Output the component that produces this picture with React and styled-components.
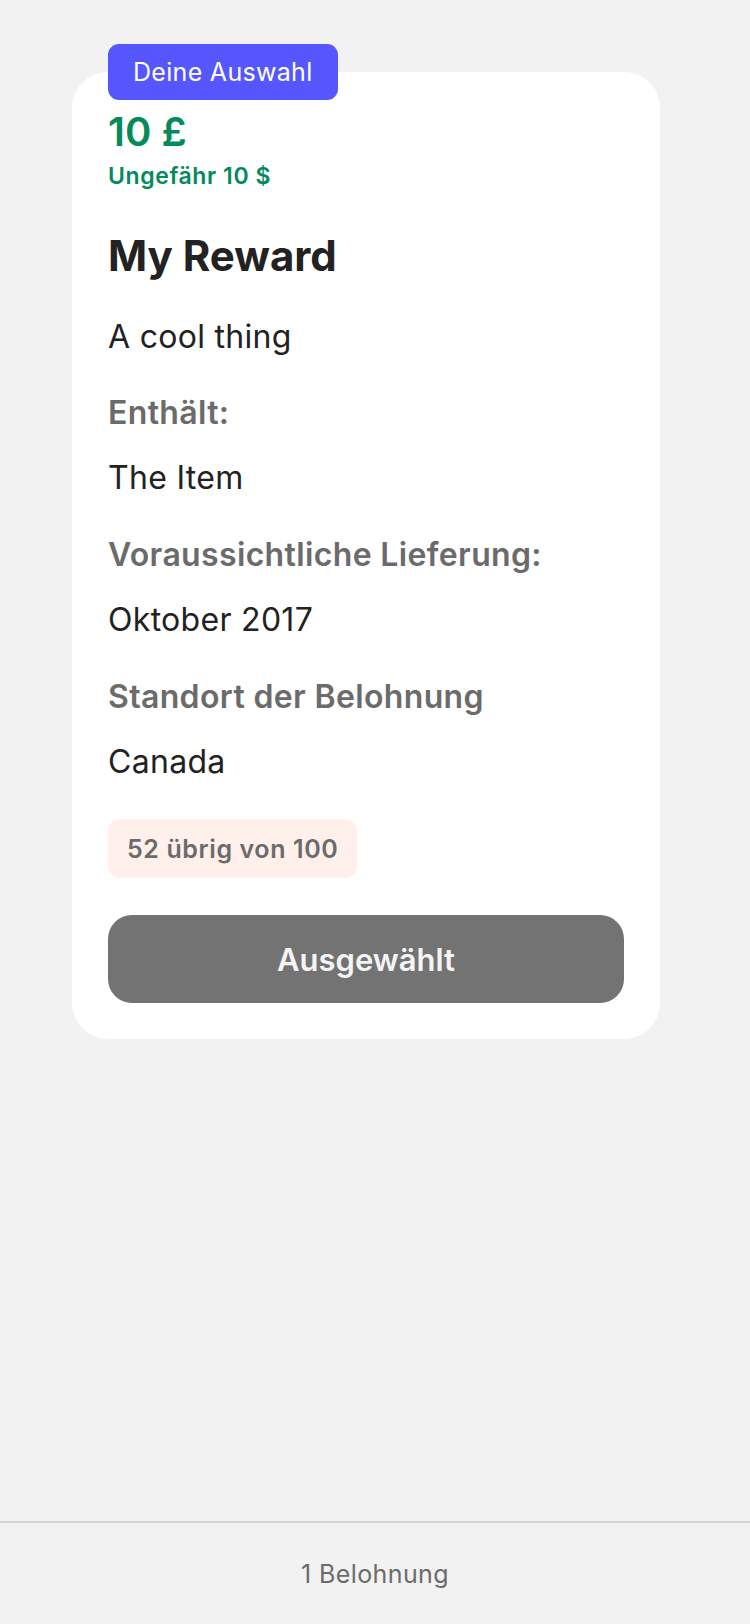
import React from "react";
import styled, { createGlobalStyle } from "styled-components";

const GlobalStyle = createGlobalStyle`
  html, body {
    margin: 0;
    padding: 0;
    background: #f2f2f2;
  }
  body {
    font-family: Inter, "Noto Sans", "Liberation Sans", sans-serif;
    -webkit-font-smoothing: antialiased;
  }
  * { box-sizing: border-box; }
`;

const Page = styled.div`
  min-height: 100vh;
  display: flex;
  flex-direction: column;
  background: #f2f2f2;
`;

const Main = styled.main`
  flex: 1;
  padding: 72px 90px 0 72px;
`;

const Card = styled.section`
  width: 588px;
  background: #ffffff;
  border-radius: 36px;
  padding: 0 36px 36px;
  display: flex;
  flex-direction: column;
  align-items: stretch;
`;

const SelectionBadge = styled.div`
  align-self: flex-start;
  margin-top: -28px;
  height: 56px;
  padding: 0 25px;
  display: flex;
  align-items: center;
  background: #5656ff;
  color: #ffffff;
  border-radius: 11px;
  font-size: 25px;
  letter-spacing: 0.3px;
  font-weight: 400;
`;

const Price = styled.div`
  margin-top: 8px;
  font-size: 40px;
  line-height: 48px;
  font-weight: 600;
  color: #048a5b;
`;

const Approx = styled.div`
  margin-top: 6px;
  font-size: 23px;
  line-height: 28px;
  letter-spacing: 0.6px;
  font-weight: 600;
  color: #048a5b;
`;

const Title = styled.h2`
  margin: 42px 0 0;
  font-size: 42px;
  line-height: 48px;
  font-weight: 700;
  color: #222222;
`;

const BodyText = styled.p`
  margin: ${(p) => p.$top || 0}px 0 0;
  font-size: 32px;
  line-height: 40px;
  letter-spacing: 0.3px;
  font-weight: 400;
  color: #222222;
`;

const DetailList = styled.div`
  margin-top: 36px;
  display: flex;
  flex-direction: column;
  gap: 37px;
`;

const Detail = styled.div`
  display: flex;
  flex-direction: column;
  gap: 25px;
`;

const Label = styled.div`
  font-size: 32px;
  line-height: 40px;
  letter-spacing: 0.35px;
  font-weight: 600;
  color: #6b6b6b;
`;

const Value = styled.div`
  font-size: 32px;
  line-height: 40px;
  letter-spacing: 0.3px;
  font-weight: 400;
  color: #222222;
`;

const RemainingPill = styled.div`
  align-self: flex-start;
  margin-top: 37px;
  height: 59px;
  padding: 0 19px;
  display: flex;
  align-items: center;
  background: #fff0eb;
  border-radius: 12px;
  font-size: 25px;
  letter-spacing: 0.6px;
  font-weight: 600;
  color: #6b6b6b;
`;

const SelectedButton = styled.button`
  margin-top: 37px;
  height: 88px;
  width: 100%;
  border: none;
  border-radius: 24px;
  background: #737373;
  color: #f4f4f4;
  font-family: inherit;
  font-size: 31px;
  font-weight: 600;
  cursor: default;
`;

const Footer = styled.footer`
  border-top: 2px solid #d4d4d4;
  height: 103px;
  display: flex;
  align-items: center;
  justify-content: center;
  font-size: 25px;
  letter-spacing: 0.4px;
  color: #6b6b6b;
`;

const details = [
  { label: "Enthält:", value: "The Item" },
  { label: "Voraussichtliche Lieferung:", value: "Oktober 2017" },
  { label: "Standort der Belohnung", value: "Canada" },
];

export default function App() {
  return (
    <>
      <GlobalStyle />
      <Page>
        <Main>
          <Card>
            <SelectionBadge>Deine Auswahl</SelectionBadge>
            <Price>10 £</Price>
            <Approx>Ungefähr 10 $</Approx>
            <Title>My Reward</Title>
            <BodyText $top={37}>A cool thing</BodyText>
            <DetailList>
              {details.map((d) => (
                <Detail key={d.label}>
                  <Label>{d.label}</Label>
                  <Value>{d.value}</Value>
                </Detail>
              ))}
            </DetailList>
            <RemainingPill>52 übrig von 100</RemainingPill>
            <SelectedButton type="button">Ausgewählt</SelectedButton>
          </Card>
        </Main>
        <Footer>1 Belohnung</Footer>
      </Page>
    </>
  );
}
